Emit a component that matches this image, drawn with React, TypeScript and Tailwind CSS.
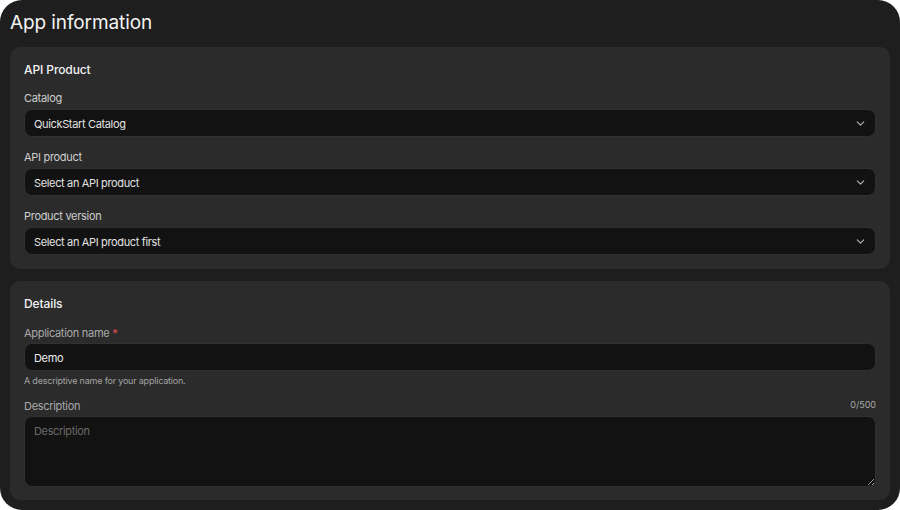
import React from "react";
import { ChevronDown } from "lucide-react";

const font = { fontFamily: "Inter, 'Noto Sans', sans-serif" };

function SelectField({ label, value, first }: { label: string; value: string; first?: boolean }) {
  return (
    <div className={first ? "" : "mt-[12px]"}>
      <div className="text-[11px] leading-[16px] tracking-[-0.3px] text-[#cfcfcf] mb-[3px]">{label}</div>
      <div className="h-[28px] rounded-[8px] bg-[#121212] border border-[#303030] flex items-center justify-between pl-[9px] pr-[8px]">
        <span className="text-[11px] leading-[14px] pt-[1px] tracking-[-0.35px] text-[#e2e2e2]">{value}</span>
        <ChevronDown size={13} strokeWidth={2} className="text-[#b5b5b5] mt-[1px]" />
      </div>
    </div>
  );
}

export default function App() {
  return (
    <div className="w-[900px] h-[510px] bg-white" style={font}>
      <div className="h-full rounded-[22px] bg-[#1e1e1e] px-[10px] pt-[9px] overflow-hidden">
        <h1 className="text-[19px] leading-[28px] text-[#f4f4f4] font-normal tracking-[-0.1px]">App information</h1>

        <div className="mt-[10px] rounded-[10px] bg-[#2b2b2b] px-[14px] pt-[13px] pb-[14px]">
          <h2 className="text-[12px] leading-[20px] font-medium tracking-[-0.1px] text-[#f2f2f2] mb-[10px]">API Product</h2>
          <SelectField first label="Catalog" value="QuickStart Catalog" />
          <SelectField label="API product" value="Select an API product" />
          <SelectField label="Product version" value="Select an API product first" />
        </div>

        <div className="mt-[12px] rounded-[10px] bg-[#2b2b2b] px-[14px] pt-[13px] pb-[13px]">
          <h2 className="text-[12px] leading-[20px] font-medium tracking-[-0.1px] text-[#f2f2f2] mb-[11px]">Details</h2>
          <div className="text-[11px] leading-[16px] tracking-[-0.3px] text-[#a9a9a9] mb-[2px]">
            Application name <span className="text-[#e5484d]">*</span>
          </div>
          <div className="h-[28px] rounded-[8px] bg-[#121212] border border-[#303030] flex items-center pl-[9px]">
            <span className="text-[11px] leading-[14px] pt-[1px] tracking-[-0.35px] text-[#ececec]">Demo</span>
          </div>
          <div className="mt-[3px] text-[9px] leading-[14px] tracking-[-0.2px] text-[#a3a3a3]">A descriptive name for your application.</div>
          <div className="mt-[10px] flex items-end justify-between mb-[2px]">
            <span className="text-[11px] leading-[16px] tracking-[-0.3px] text-[#a9a9a9]">Description</span>
            <span className="text-[9px] leading-[14px] text-[#a9a9a9] mb-[2px]">0/500</span>
          </div>
          <textarea
            placeholder="Description"
            className="block w-full h-[71px] rounded-[8px] bg-[#121212] border border-[#303030] px-[9px] py-[6px] text-[11px] tracking-[-0.35px] text-[#e2e2e2] placeholder:text-[#6a6a6a] outline-none"
            style={font}
          />
        </div>
      </div>
    </div>
  );
}
